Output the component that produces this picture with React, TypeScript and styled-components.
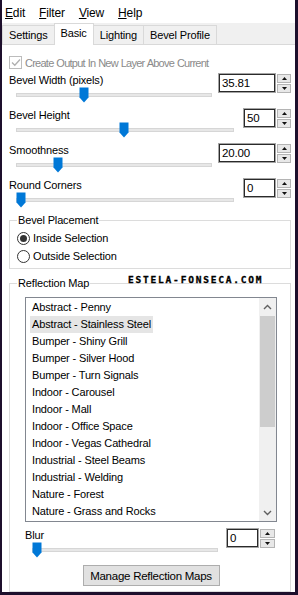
import React from 'react'
import styled, { createGlobalStyle } from 'styled-components'

const FRAME = '#1d0f2c'
const FONT = `'Liberation Sans', Arial, sans-serif`

const GlobalStyle = createGlobalStyle`
  html, body { margin: 0; padding: 0; background: #fff; }
  body { font-family: ${FONT}; font-size: 11px; color: #000; letter-spacing: -0.15px; }
  * { box-sizing: border-box; }
`

const Window = styled.div`
  width: 298px;
  height: 595px;
  display: flex;
  flex-direction: column;
  background: #fff;
  border-left: 2px solid ${FRAME};
  border-right: 3px solid ${FRAME};
  border-bottom: 3px solid ${FRAME};
  overflow: hidden;
`

const MenuBar = styled.div`
  height: 23px;
  display: flex;
  align-items: center;
  gap: 14px;
  padding: 3px 0 0 3px;
  font-size: 12px;
`

const MenuItem = styled.span`
  line-height: 14px;
`

const TabStrip = styled.div`
  height: 23px;
  display: flex;
  align-items: flex-end;
  background: #f0f0f0;
  border-bottom: 1px solid #d9d9d9;
`

const Tab = styled.div<{ $active?: boolean }>`
  height: ${(p) => (p.$active ? '22px' : '19px')};
  margin-bottom: ${(p) => (p.$active ? '-1px' : '0')};
  padding: ${(p) => (p.$active ? '0 6px 3px' : '0 6px')};
  margin-right: -1px;
  display: flex;
  align-items: center;
  background: ${(p) => (p.$active ? '#fff' : '#f0f0f0')};
  border: 1px solid #d9d9d9;
  border-bottom: none;
  position: relative;
  z-index: ${(p) => (p.$active ? 1 : 0)};
  white-space: nowrap;
`

const Panel = styled.div`
  flex: 1;
  display: flex;
  flex-direction: column;
  padding: 11px 4px 0 7px;
`

const CheckRow = styled.label`
  display: flex;
  align-items: center;
  gap: 3px;
  height: 13px;
  margin-bottom: 4px;
  color: #8a8a8a;
  letter-spacing: -0.75px;
  word-spacing: 0.5px;
  white-space: nowrap;
`

const CheckBox = styled.span`
  width: 13px;
  height: 13px;
  border: 1px solid #bcbcbc;
  display: flex;
  align-items: center;
  justify-content: center;
  flex: none;
`

const SliderRow = styled.div<{ $inset?: number }>`
  height: 35px;
  display: flex;
  justify-content: space-between;
  align-items: flex-start;
  margin-right: ${(p) => p.$inset ?? 0}px;
`

const LabelCol = styled.div`
  display: flex;
  flex-direction: column;
`

const Label = styled.span`
  line-height: 14px;
  white-space: nowrap;
`

const Slider = styled.div<{ $width: number }>`
  position: relative;
  width: ${(p) => p.$width}px;
  height: 16px;
  margin-left: 7px;
`

const Track = styled.div`
  margin-top: 6px;
  height: 4px;
  background: #e7e7e7;
  border: 1px solid #d6d6d6;
`

const Thumb = styled.svg`
  position: absolute;
  top: 0;
`

const Spin = styled.div`
  display: flex;
  gap: 1px;
`

const SpinInput = styled.div<{ $width: number }>`
  width: ${(p) => p.$width}px;
  height: 20px;
  border: 1px solid #a5a5a5;
  box-shadow: inset 0 0 0 1px #2a2a2a;
  padding: 0 3px;
  display: flex;
  align-items: center;
  font-size: 11.5px;
`

const SpinButtons = styled.div<{ $width?: number }>`
  width: ${(p) => p.$width ?? 14}px;
  height: 20px;
  display: flex;
  flex-direction: column;
  gap: 1px;
  padding-top: 1px;
`

const SpinButton = styled.div`
  flex: 1;
  background: #e8e8e8;
  border: 1px solid #b4b4b4;
  display: flex;
  align-items: center;
  justify-content: center;
`

const Group = styled.fieldset<{ $pad: string; $gap?: number }>`
  position: relative;
  margin: ${(p) => p.$gap ?? 0}px 0 0;
  padding: ${(p) => p.$pad};
  border: 1px solid #dcdcdc;
  min-width: 0;
  display: flex;
  flex-direction: column;
`

const Legend = styled.legend<{ $shift?: number }>`
  padding: 0 1px;
  margin-left: ${(p) => p.$shift ?? 0}px;
  line-height: 14px;
`

const RadioRow = styled.label`
  height: 18px;
  display: flex;
  align-items: center;
  gap: 3px;
`

const RadioCircle = styled.span<{ $on?: boolean }>`
  width: 13px;
  height: 13px;
  border-radius: 50%;
  border: 1px solid #333;
  display: flex;
  align-items: center;
  justify-content: center;
  &::after {
    content: '';
    width: 7px;
    height: 7px;
    border-radius: 50%;
    background: ${(p) => (p.$on ? '#333' : 'transparent')};
  }
`

const Watermark = styled.span`
  position: absolute;
  left: 118px;
  top: -15px;
  font-family: 'DejaVu Sans Mono', monospace;
  font-weight: bold;
  font-size: 9.5px;
  letter-spacing: 1.8px;
  line-height: 10px;
  color: #000;
  -webkit-text-stroke: 0.3px #000;
`

const ListBox = styled.div`
  height: 225px;
  border: 1px solid #828790;
  display: flex;
`

const ItemList = styled.div`
  flex: 1;
  padding: 1px 0 0 4px;
  overflow: hidden;
`

const Item = styled.div`
  height: 17px;
`

const ItemText = styled.span<{ $selected?: boolean }>`
  display: inline-block;
  height: 17px;
  line-height: 17px;
  padding: 0 2px;
  background: ${(p) => (p.$selected ? '#e5e5e5' : 'transparent')};
  white-space: nowrap;
`

const ScrollBar = styled.div`
  width: 17px;
  display: flex;
  flex-direction: column;
  background: #f0f0f0;
`

const ScrollArrow = styled.div`
  height: 17px;
  display: flex;
  align-items: center;
  justify-content: center;
`

const ScrollTrack = styled.div`
  flex: 1;
  padding: 1px 1px 0;
`

const ScrollThumb = styled.div`
  height: 111px;
  background: #cdcdcd;
`

const BlurRow = styled(SliderRow)`
  margin-top: 6px;
`

const Button = styled.button`
  align-self: center;
  width: 137px;
  height: 21px;
  margin-top: 2px;
  background: #e1e1e1;
  border: 1px solid #adadad;
  font-family: ${FONT};
  font-size: 11.5px;
  letter-spacing: -0.25px;
  color: #000;
  padding: 0;
`

const ThumbIcon = ({ left }: { left: number }) => (
  <Thumb width="10" height="16" viewBox="0 0 10 16" style={{ left }}>
    <path d="M0.5 0.5 H9.5 V10.5 L5 15.5 L0.5 10.5 Z" fill="#0078d7" />
  </Thumb>
)

const Arrow = ({ up }: { up?: boolean }) => (
  <svg width="5" height="3" viewBox="0 0 5 3">
    <path d={up ? 'M0 3 L2.5 0 L5 3 Z' : 'M0 0 L5 0 L2.5 3 Z'} fill="#111" />
  </svg>
)

const Chevron = ({ up }: { up?: boolean }) => (
  <svg width="9" height="6" viewBox="0 0 9 6">
    <path
      d={up ? 'M1 5 L4.5 1.5 L8 5' : 'M1 1 L4.5 4.5 L8 1'}
      fill="none"
      stroke="#606060"
      strokeWidth="1.4"
    />
  </svg>
)

type SpinProps = { value: string; width: number; btnWidth?: number }

const SpinBox = ({ value, width, btnWidth }: SpinProps) => (
  <Spin>
    <SpinInput $width={width}>{value}</SpinInput>
    <SpinButtons $width={btnWidth}>
      <SpinButton>
        <Arrow up />
      </SpinButton>
      <SpinButton>
        <Arrow />
      </SpinButton>
    </SpinButtons>
  </Spin>
)

const sliders = [
  { label: 'Bevel Width (pixels)', track: 196, thumb: 63, value: '35.81', box: 58 },
  { label: 'Bevel Height', track: 218, thumb: 103, value: '50', box: 33 },
  { label: 'Smoothness', track: 196, thumb: 37, value: '20.00', box: 58 },
  { label: 'Round Corners', track: 218, thumb: 0, value: '0', box: 33 },
]

const maps = [
  'Abstract - Penny',
  'Abstract - Stainless Steel',
  'Bumper - Shiny Grill',
  'Bumper - Silver Hood',
  'Bumper - Turn Signals',
  'Indoor - Carousel',
  'Indoor - Mall',
  'Indoor - Office Space',
  'Indoor - Vegas Cathedral',
  'Industrial - Steel Beams',
  'Industrial - Welding',
  'Nature - Forest',
  'Nature - Grass and Rocks',
]

const App = () => {
  return (
    <Window>
      <GlobalStyle />
      <MenuBar>
        <MenuItem>
          <u>E</u>dit
        </MenuItem>
        <MenuItem>
          <u>F</u>ilter
        </MenuItem>
        <MenuItem>
          <u>V</u>iew
        </MenuItem>
        <MenuItem>
          <u>H</u>elp
        </MenuItem>
      </MenuBar>
      <TabStrip>
        <Tab>Settings</Tab>
        <Tab $active>Basic</Tab>
        <Tab>Lighting</Tab>
        <Tab>Bevel Profile</Tab>
      </TabStrip>
      <Panel>
        <CheckRow>
          <CheckBox>
            <svg width="10" height="9" viewBox="0 0 10 9">
              <path d="M1 4.5 L3.8 7.3 L9 1.5" fill="none" stroke="#b0b0b0" strokeWidth="1.3" />
            </svg>
          </CheckBox>
          Create Output In New Layer Above Current
        </CheckRow>

        {sliders.map((s) => (
          <SliderRow key={s.label}>
            <LabelCol>
              <Label>{s.label}</Label>
              <Slider $width={s.track}>
                <Track />
                <ThumbIcon left={s.thumb} />
              </Slider>
            </LabelCol>
            <SpinBox value={s.value} width={s.box} />
          </SliderRow>
        ))}

        <Group $pad="2px 0 3px 7px">
          <Legend>Bevel Placement</Legend>
          <RadioRow>
            <RadioCircle $on />
            Inside Selection
          </RadioRow>
          <RadioRow>
            <RadioCircle />
            Outside Selection
          </RadioRow>
        </Group>

        <Group $pad="7px 13px 5px 15px" $gap={7}>
          <Legend $shift={-8}>Reflection Map</Legend>
          <Watermark>ESTELA-FONSECA.COM</Watermark>
          <ListBox>
            <ItemList>
              {maps.map((m, i) => (
                <Item key={m}>
                  <ItemText $selected={i === 1}>{m}</ItemText>
                </Item>
              ))}
            </ItemList>
            <ScrollBar>
              <ScrollArrow>
                <Chevron up />
              </ScrollArrow>
              <ScrollTrack>
                <ScrollThumb />
              </ScrollTrack>
              <ScrollArrow>
                <Chevron />
              </ScrollArrow>
            </ScrollBar>
          </ListBox>

          <BlurRow $inset={2}>
            <LabelCol>
              <Label>Blur</Label>
              <Slider $width={186}>
                <Track />
                <ThumbIcon left={0} />
              </Slider>
            </LabelCol>
            <SpinBox value="0" width={33} btnWidth={15} />
          </BlurRow>

          <Button>Manage Reflection Maps</Button>
        </Group>
      </Panel>
    </Window>
  )
}

export default App
